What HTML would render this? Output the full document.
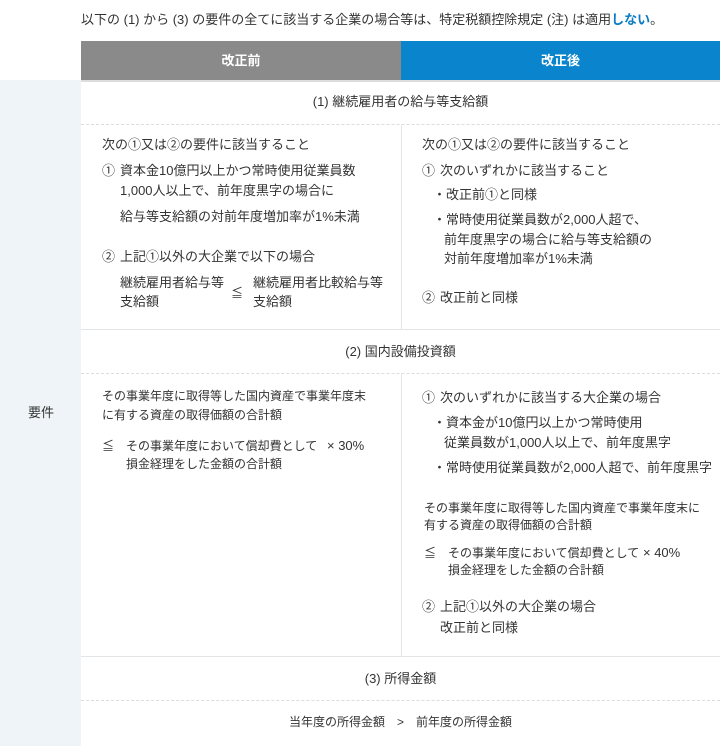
<!DOCTYPE html><html><head><meta charset="utf-8"><style>
body{margin:0;width:720px;height:746px;position:relative;background:#fff;font-family:"Liberation Sans","Noto Sans CJK JP",sans-serif;color:#333;overflow:hidden}
.t{position:absolute;font-size:13px;line-height:16px;white-space:nowrap}
.s{font-size:12px}
.c{left:81px;width:639px;text-align:center}
.hl{position:absolute;left:81px;width:639px;height:0}
</style></head><body>
<div style="position:absolute;left:0;top:80px;width:81px;height:666px;background:#eef4f7"></div>
<div class="t" style="left:81px;top:12px">以下の (1) から (3) の要件の全てに該当する企業の場合等は、特定税額控除規定 (注) は適用<b style="color:#0a7bc4;font-weight:bold">しない</b>。</div>
<div style="position:absolute;left:81px;top:41px;width:320px;height:39px;background:#8a8a8a;color:#fff;font-weight:bold;font-size:13px;line-height:39px;text-align:center">改正前</div>
<div style="position:absolute;left:401px;top:41px;width:319px;height:39px;background:#0a84cc;color:#fff;font-weight:bold;font-size:13px;line-height:39px;text-align:center">改正後</div>
<div class="hl" style="top:80px;border-top:2px solid #ddd"></div>
<div class="hl" style="top:124px;border-top:1px dashed #ddd"></div>
<div class="hl" style="top:329px;border-top:1px solid #e3e6e8"></div>
<div class="hl" style="top:373px;border-top:1px dashed #ddd"></div>
<div class="hl" style="top:656px;border-top:1px solid #e3e6e8"></div>
<div class="hl" style="top:700px;border-top:1px dashed #ddd"></div>
<div style="position:absolute;left:401px;top:125px;width:0;height:204px;border-left:1px solid #e3e6e8"></div>
<div style="position:absolute;left:401px;top:374px;width:0;height:282px;border-left:1px solid #e3e6e8"></div>
<div class="t" style="left:28px;top:405px">要件</div>
<div class="t c" style="top:94px">(1) 継続雇用者の給与等支給額</div>
<div class="t" style="left:102px;top:137px">次の①又は②の要件に該当すること</div>
<div class="t" style="left:102px;top:163px">①</div><div class="t" style="left:120px;top:163px">資本金10億円以上かつ常時使用従業員数</div>
<div class="t" style="left:120px;top:183px">1,000人以上で、前年度黒字の場合に</div>
<div class="t" style="left:120px;top:209px">給与等支給額の対前年度増加率が1%未満</div>
<div class="t" style="left:102px;top:249px">②</div><div class="t" style="left:120px;top:249px">上記①以外の大企業で以下の場合</div>
<div class="t" style="left:120px;top:275px">継続雇用者給与等</div><div class="t" style="left:120px;top:294px">支給額</div>
<div class="t s" style="left:231px;top:285px">≦</div>
<div class="t" style="left:253px;top:275px">継続雇用者比較給与等</div><div class="t" style="left:253px;top:294px">支給額</div>
<div class="t" style="left:422px;top:137px">次の①又は②の要件に該当すること</div>
<div class="t" style="left:422px;top:163px">①</div><div class="t" style="left:440px;top:163px">次のいずれかに該当すること</div>
<div class="t" style="left:433px;top:187px">・改正前①と同様</div>
<div class="t" style="left:433px;top:212px">・常時使用従業員数が2,000人超で、</div>
<div class="t" style="left:444px;top:232px">前年度黒字の場合に給与等支給額の</div>
<div class="t" style="left:444px;top:251px">対前年度増加率が1%未満</div>
<div class="t" style="left:422px;top:290px">②</div><div class="t" style="left:440px;top:290px">改正前と同様</div>
<div class="t c" style="top:344px">(2) 国内設備投資額</div>
<div class="t s" style="left:102px;top:388px">その事業年度に取得等した国内資産で事業年度末</div>
<div class="t s" style="left:102px;top:407px">に有する資産の取得価額の合計額</div>
<div class="t s" style="left:102px;top:438px">≦</div>
<div class="t s" style="left:126px;top:438px">その事業年度において償却費として</div>
<div class="t" style="left:327px;top:438px">× 30%</div>
<div class="t s" style="left:126px;top:456px">損金経理をした金額の合計額</div>
<div class="t" style="left:422px;top:390px">①</div><div class="t" style="left:440px;top:390px">次のいずれかに該当する大企業の場合</div>
<div class="t" style="left:433px;top:415px">・資本金が10億円以上かつ常時使用</div>
<div class="t" style="left:444px;top:435px">従業員数が1,000人以上で、前年度黒字</div>
<div class="t" style="left:433px;top:460px">・常時使用従業員数が2,000人超で、前年度黒字</div>
<div class="t s" style="left:424px;top:500px">その事業年度に取得等した国内資産で事業年度末に</div>
<div class="t s" style="left:424px;top:517px">有する資産の取得価額の合計額</div>
<div class="t s" style="left:424px;top:545px">≦</div>
<div class="t s" style="left:448px;top:545px">その事業年度において償却費として</div>
<div class="t" style="left:643px;top:545px">× 40%</div>
<div class="t s" style="left:448px;top:562px">損金経理をした金額の合計額</div>
<div class="t" style="left:422px;top:599px">②</div><div class="t" style="left:440px;top:599px">上記①以外の大企業の場合</div>
<div class="t" style="left:440px;top:620px">改正前と同様</div>
<div class="t c" style="top:671px">(3) 所得金額</div>
<div class="t c s" style="top:714px">当年度の所得金額　&gt;　前年度の所得金額</div>
</body></html>
